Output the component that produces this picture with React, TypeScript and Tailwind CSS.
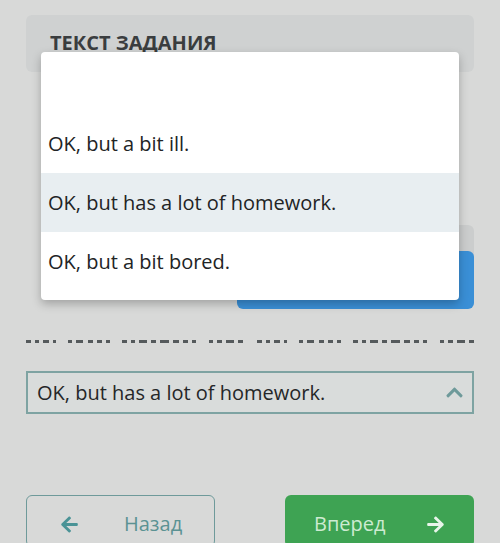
import {FaArrowLeft, FaArrowRight, FaChevronUp} from 'react-icons/fa'

const options = [
    'OK, but a bit ill.',
    'OK, but has a lot of homework.',
    'OK, but a bit bored.',
]

const selected = 'OK, but has a lot of homework.'

// clipped line of answer text below the buttons: dash widths, 0 = word break
const half = [5, 4, 6, 3, 0, 4, 7, 5, 5, 4, 0, 5, 4, 8, 5, 9, 6, 5, 4, 0, 4, 5, 8, 5]

function DashRun() {
    return (
        <div className="flex flex-1 items-center justify-between">
            {half.map((w, i) => w === 0
                ? <div key={i} className="w-[4px]"/>
                : <div key={i} className="h-[3px] bg-[#555a5c]" style={{width: w}}/>)}
        </div>
    )
}

export default function App() {
    return (
        <div
            className="relative w-[500px] h-[543px] overflow-hidden bg-[#d8d9d8]"
            style={{fontFamily: '"Open Sans", "Noto Sans", sans-serif'}}
        >
            <div className="flex flex-col px-[26px] pt-[15px]">
                <div className="h-[57px] rounded-md bg-[#cfd1d1] px-6 pt-[18px]">
                    <div className="text-[20px] font-bold leading-none text-[#3a3d3f]">ТЕКСТ ЗАДАНИЯ</div>
                </div>

                <div className="mt-[153px] flex flex-col items-end">
                    <div className="h-[30px] w-[250px] rounded-t-md bg-[#cbcdcd]"/>
                    <div className="-mt-[4px] h-[58px] w-[237px] rounded-md bg-[#3a8fd6]"/>
                </div>

                <div className="mt-[31px] flex h-[3px] items-center gap-[14px] overflow-hidden">
                    <DashRun/>
                    <DashRun/>
                </div>

                <div className="mt-[28px] flex h-[43px] items-center justify-between border-2 border-[#7ea3a2] bg-[#d9dcdb] pl-[9px] pr-[8px]">
                    <span className="text-[20px] text-[#252728]">{selected}</span>
                    <FaChevronUp className="text-[19px] text-[#6e9a9a]"/>
                </div>

                <div className="mt-[81px] flex justify-between">
                    <button className="flex h-[52px] w-[189px] items-center rounded-md border border-[#6e9a9a] pl-[33px] pt-[6px]">
                        <FaArrowLeft className="text-[19px] text-[#4a9396]"/>
                        <span className="ml-[45px] text-[20px] text-[#5b9293]">Назад</span>
                    </button>
                    <button className="flex h-[52px] w-[189px] items-center justify-between rounded-md bg-[#3ea353] pl-[29px] pr-[29px] pt-[6px]">
                        <span className="text-[20px] text-[#cdebd1]">Вперед</span>
                        <FaArrowRight className="text-[19px] text-[#e8f5ea]"/>
                    </button>
                </div>
            </div>

            {/* open options menu */}
            <div className="absolute left-[41px] top-[52px] w-[418px] rounded-sm bg-white pt-[62px] pb-[9px] shadow-[0_4px_10px_rgba(0,0,0,0.25)]">
                {options.map((o) => (
                    <div
                        key={o}
                        className={`flex h-[59px] items-center px-[7px] text-[20px] text-[#222425] ${o === selected ? 'bg-[#e8eef1]' : ''}`}
                    >
                        {o}
                    </div>
                ))}
            </div>
        </div>
    )
}
